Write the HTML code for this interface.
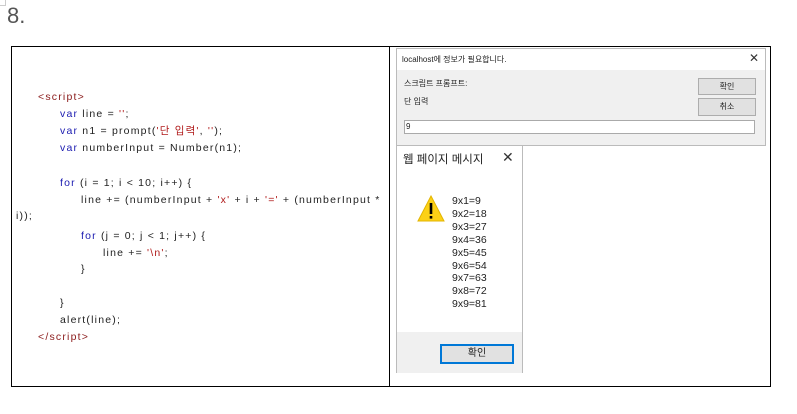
<!DOCTYPE html>
<html><head><meta charset="utf-8"><style>
body{margin:0;width:797px;height:414px;background:#fff;position:relative;overflow:hidden;font-family:"Liberation Sans","Noto Sans CJK KR",sans-serif}
.a{position:absolute}
.code{font-family:"Liberation Sans","Noto Sans CJK KR",sans-serif;font-size:10.5px;letter-spacing:1.2px;color:#222;white-space:pre;line-height:13px}
.k{color:#1a1ab0}.s{color:#b01a1a}.t{color:#8a1a1a}
.ui{font-size:8px;color:#222}
.btn{position:absolute;background:#e1e1e1;border:1px solid #adadad;font-size:8px;text-align:center;color:#222}
.m{font-size:10.5px;color:#222;line-height:12.9px}
</style></head><body>
<div class="a" style="left:7px;top:3px;font-size:22px;color:#555;font-family:'Liberation Sans',sans-serif">8.</div>
<div class="a" style="left:0;top:0;width:5px;height:5px;border-right:1px solid #ccc;border-bottom:1px solid #ccc"></div>
<div class="a" style="left:11px;top:46px;width:758px;height:339px;border:1px solid #000"></div>
<div class="a" style="left:389px;top:46px;width:1px;height:341px;background:#000"></div>
<div class="a code" style="left:38px;top:91px"><span class="t">&lt;script&gt;</span></div>
<div class="a code" style="left:60px;top:108px"><span class="k">var</span> line = <span class="s">''</span>;</div>
<div class="a code" style="left:60px;top:125px"><span class="k">var</span> n1 = prompt(<span class="s">'단 입력'</span>, <span class="s">''</span>);</div>
<div class="a code" style="left:60px;top:142px"><span class="k">var</span> numberInput = Number(n1);</div>
<div class="a code" style="left:60px;top:177px"><span class="k">for</span> (i = 1; i &lt; 10; i++) {</div>
<div class="a code" style="left:81px;top:194px">line += (numberInput + <span class="s">'x'</span> + i + <span class="s">'='</span> + (numberInput *</div>
<div class="a code" style="left:16px;top:210px">i));</div>
<div class="a code" style="left:81px;top:230px"><span class="k">for</span> (j = 0; j &lt; 1; j++) {</div>
<div class="a code" style="left:103px;top:247px">line += <span class="s">'\n'</span>;</div>
<div class="a code" style="left:81px;top:263px">}</div>
<div class="a code" style="left:60px;top:297px">}</div>
<div class="a code" style="left:60px;top:314px">alert(line);</div>
<div class="a code" style="left:38px;top:331px"><span class="t">&lt;/script&gt;</span></div>

<div class="a" style="left:396px;top:48px;width:368px;height:96px;border:1px solid #bbb;background:#f0f0f0"></div>
<div class="a" style="left:397px;top:49px;width:368px;height:21px;background:#fff"></div>
<div class="a ui" style="left:402px;top:54px">localhost에 정보가 필요합니다.</div>
<div class="a" style="left:749px;top:51px;font-size:12px;color:#333">✕</div>
<div class="a ui" style="left:404px;top:78px">스크립트 프롬프트:</div>
<div class="a ui" style="left:404px;top:96px">단 입력</div>
<div class="btn" style="left:698px;top:78px;width:56px;height:15px;line-height:15px">확인</div>
<div class="btn" style="left:698px;top:98px;width:56px;height:16px;line-height:16px">취소</div>
<div class="a" style="left:404px;top:120px;width:349px;height:12px;background:#fff;border:1px solid #aaa"></div>
<div class="a ui" style="left:406px;top:122px">9</div>

<div class="a" style="left:396px;top:146px;width:125px;height:226px;border:1px solid #bbb;border-top:none;background:#fff"></div>
<div class="a" style="left:397px;top:332px;width:125px;height:41px;background:#f0f0f0"></div>
<div class="a" style="left:403px;top:151px;font-size:11.5px;color:#222">웹 페이지 메시지</div>
<div class="a" style="left:502px;top:149px;font-size:14px;color:#333">✕</div>
<svg class="a" style="left:417px;top:195px" width="28" height="28"><polygon points="14,1 27,26 1,26" fill="#fcd116" stroke="#e3b500"/><rect x="12.7" y="8" width="2.6" height="11" fill="#000"/><rect x="12.7" y="21" width="2.6" height="2.6" fill="#000"/></svg>
<div class="a m" style="left:452px;top:195px">9x1=9<br>9x2=18<br>9x3=27<br>9x4=36<br>9x5=45<br>9x6=54<br>9x7=63<br>9x8=72<br>9x9=81</div>
<div class="a" style="left:440px;top:344px;width:70px;height:16px;border:2px solid #0078d7;background:#e1e1e1;font-size:10px;text-align:center;line-height:16px;color:#222">확인</div>
</body></html>
